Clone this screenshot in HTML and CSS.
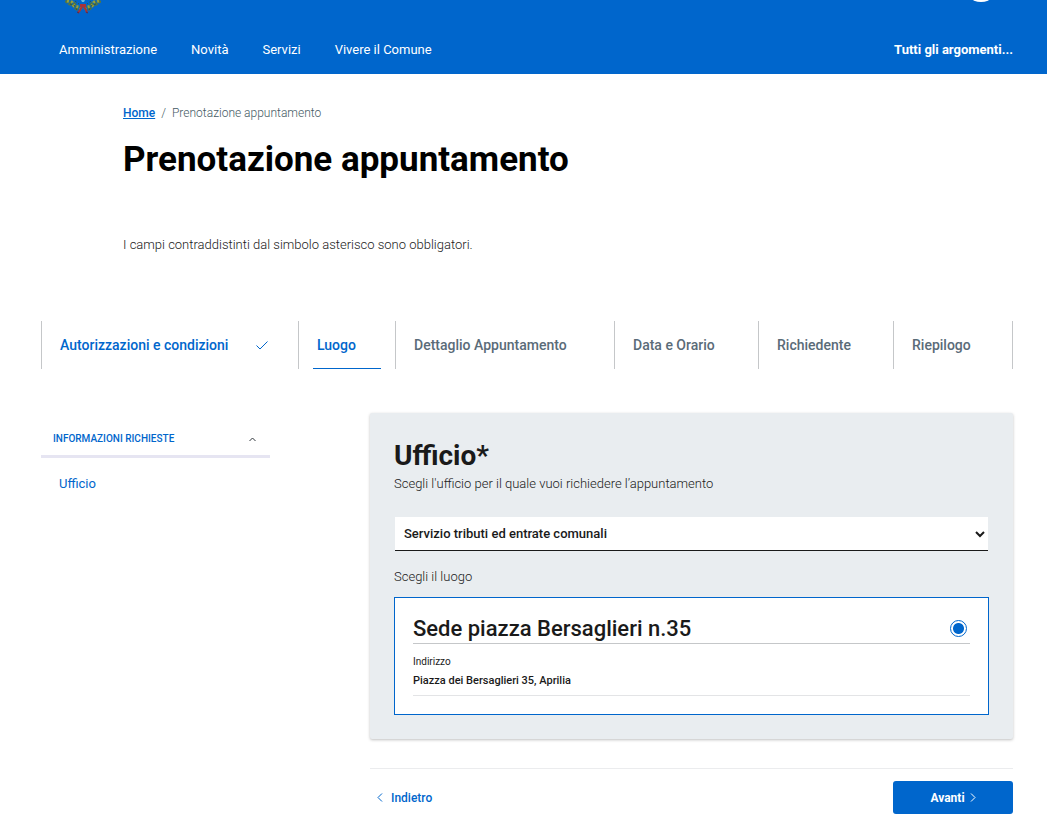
FILE: index.html
```
<!DOCTYPE html>
<html lang="it">
<head>
  <meta charset="UTF-8">
  <meta name="viewport" content="width=device-width, initial-scale=1">
  <title>Prenotazione appuntamento</title>
  <link rel="stylesheet" href="styles.css">
</head>
<body>
  <header class="header">
    <div class="header-brand">
      <svg class="crest" viewBox="0 0 36 14" width="36" height="14" aria-hidden="true">
        <g fill="none">
          <path d="M1 0l4 3 3 1 4 4 4 1M35 0l-4 3-3 1-4 4-4 1" stroke="#4f7548" stroke-width="5" stroke-dasharray="3 1"/>
          <path d="M2 1l5 1 2 4 5 1 3 3M34 1l-5 1-2 4-5 1-3 3" stroke="#96a03c" stroke-width="3" stroke-dasharray="2 2"/>
          <path d="M5 4l4 1 3 5M31 4l-4 1-3 5M10 1l4 3M26 1l-4 3" stroke="#35543f" stroke-width="1" stroke-dasharray="2 2"/>
        </g>
        <path d="M16 0h4l-1 2h-2z" fill="#69b8e0"/>
        <path d="M15 4h6v3h-6z" fill="#a8323a"/>
        <path d="M17 7l-2 3-2 3M19 7l2 3 1 3" fill="none" stroke="#a8323a" stroke-width="2"/>
        <path d="M12 12l2 1M21 12l2 1" stroke="#4b2c50" stroke-width="1"/>
      </svg>
      <svg class="search-circle" viewBox="0 34 36 2" width="36" height="2" aria-hidden="true">
        <circle cx="18" cy="18" r="18" fill="#fff"/>
      </svg>
    </div>
    <nav class="header-nav">
      <a href="#">Amministrazione</a>
      <a href="#">Novità</a>
      <a href="#">Servizi</a>
      <a href="#">Vivere il Comune</a>
      <a href="#" class="all-topics">Tutti gli argomenti...</a>
    </nav>
  </header>

  <main class="container">
    <section class="intro">
      <nav class="breadcrumb">
        <a href="#">Home</a>
        <span>/</span>
        <span>Prenotazione appuntamento</span>
      </nav>
      <h1>Prenotazione appuntamento</h1>
      <p>I campi contraddistinti dal simbolo asterisco sono obbligatori.</p>
    </section>

    <ol class="steps">
      <li class="done">Autorizzazioni e condizioni
        <svg viewBox="0 0 12 9" width="12" height="9" aria-hidden="true"><path d="M.5 4.500l3.500 3.500 7.500-7.500" fill="none" stroke="#0066cc"/></svg>
      </li>
      <li class="active">Luogo</li>
      <li>Dettaglio Appuntamento</li>
      <li>Data e Orario</li>
      <li>Richiedente</li>
      <li>Riepilogo</li>
    </ol>

    <div class="columns">
      <aside class="sidebar">
        <button type="button" class="sidebar-toggle">Informazioni richieste
          <svg viewBox="0 0 7 5" width="7" height="5" aria-hidden="true"><path d="M.5 4l3-3 3 3" fill="none" stroke="#30373d"/></svg>
        </button>
        <a href="#ufficio">Ufficio</a>
      </aside>

      <form class="booking">
        <section class="panel" id="ufficio">
          <h2><label for="office">Ufficio*</label></h2>
          <p>Scegli l'ufficio per il quale vuoi richiedere l’appuntamento</p>
          <div class="select-wrap">
            <select id="office">
              <option>Servizio tributi ed entrate comunali</option>
            </select>
            <svg viewBox="0 0 10 7" width="10" height="7" aria-hidden="true"><path d="M1 1l4 4 4-4" fill="none" stroke="#1a1a1a" stroke-width="2"/></svg>
          </div>
          <p class="place-label">Scegli il luogo</p>
          <div class="place">
            <div class="place-head">
              <label for="place-1">Sede piazza Bersaglieri n.35</label>
              <input type="radio" id="place-1" name="place" checked>
            </div>
            <div class="place-body">
              <span>Indirizzo</span>
              <strong>Piazza dei Bersaglieri 35, Aprilia</strong>
            </div>
          </div>
        </section>

        <div class="actions">
          <button type="button" class="btn-back">
            <svg viewBox="0 0 6 9" width="6" height="9" aria-hidden="true"><path d="M5 .5l-4 4 4 4" fill="none" stroke="currentColor"/></svg>
            Indietro
          </button>
          <button type="button" class="btn-next">
            Avanti
            <svg viewBox="0 0 6 9" width="6" height="9" aria-hidden="true"><path d="M1 .5l4 4-4 4" fill="none" stroke="currentColor"/></svg>
          </button>
        </div>
      </form>
    </div>
  </main>
</body>
</html>
```

FILE: styles.css
```
* {
  box-sizing: border-box;
}

body {
  margin: 0;
  font-family: Roboto, "Liberation Sans", sans-serif;
  font-size: 13px;
  line-height: 20px;
  color: #1a1a1a;
  background: #fff;
}

h1, h2, p {
  margin: 0;
}

p {
  font-weight: 300;
}

a {
  color: #0066cc;
  text-decoration: none;
}

button {
  font-family: inherit;
  border: none;
  cursor: pointer;
}

/* header */
.header {
  background: #0066cc;
  padding: 0 34px 0 59px;
}

.header-brand {
  display: flex;
  justify-content: space-between;
  align-items: flex-start;
  height: 40px;
  padding: 0 14px 0 6px;
}

.header-nav {
  display: flex;
  gap: 34px;
  padding-bottom: 14px;
}

.header-nav a {
  color: #fff;
}

.header-nav .all-topics {
  margin-left: auto;
  font-weight: 700;
}

/* page intro */
.container {
  padding: 0 34px 0 41px;
}

.intro {
  padding: 29px 0 0 82px;
}

.breadcrumb {
  display: flex;
  gap: 6px;
  font-size: 12px;
  font-weight: 300;
  color: #455a64;
}

.breadcrumb a {
  font-weight: 500;
  text-decoration: underline;
}

h1 {
  margin-top: 15px;
  font-size: 35px;
  line-height: 44px;
  font-weight: 700;
  color: #000;
}

.intro p {
  margin-top: 53px;
}

/* steps */
.steps {
  display: grid;
  grid-template-columns: 257fr 97fr 219fr 144fr 135fr 119fr;
  margin: 66px 0 44px;
  padding: 0;
  list-style: none;
  border-right: 1px solid #c5c7c9;
}

.steps li {
  position: relative;
  display: flex;
  align-items: center;
  height: 48px;
  padding-left: 18px;
  border-left: 1px solid #c5c7c9;
  font-size: 14px;
  font-weight: 500;
  color: #5a6b78;
  white-space: nowrap;
}

.steps .done,
.steps .active {
  color: #0066cc;
}

.steps .done {
  justify-content: space-between;
  padding-right: 30px;
}

.steps .active::after {
  content: "";
  position: absolute;
  left: 14px;
  right: 14px;
  bottom: 0;
  height: 1px;
  background: #0066cc;
}

/* columns */
.columns {
  display: grid;
  grid-template-columns: 229fr 643fr;
  gap: 100px;
}

.sidebar {
  padding-top: 10px;
}

.sidebar-toggle {
  display: flex;
  justify-content: space-between;
  align-items: center;
  width: 100%;
  padding: 6px 14px 6px 12px;
  background: none;
  border-bottom: 3px solid #e6e5f2;
  font-size: 10px;
  line-height: 20px;
  font-weight: 500;
  text-transform: uppercase;
  color: #0066cc;
}

.sidebar a {
  display: block;
  padding: 16px 18px;
}

.panel {
  padding: 25px 24px 24px;
  background: #e9edf0;
  border-radius: 2px;
  box-shadow: 0 1px 3px rgba(0, 0, 0, 0.25);
}

h2 {
  font-size: 28px;
  line-height: 36px;
  font-weight: 700;
}

.select-wrap {
  position: relative;
  margin: 23px 1px 16px;
}

.select-wrap select {
  display: block;
  width: 100%;
  height: 34px;
  padding: 0 30px 0 9px;
  appearance: none;
  background: #fff;
  border: none;
  border-bottom: 1px solid #1a1a1a;
  border-radius: 0;
  font-family: inherit;
  font-size: 13px;
  font-weight: 500;
  color: #1a1a1a;
}

.select-wrap svg {
  position: absolute;
  right: 3px;
  top: 14px;
  pointer-events: none;
}

.place {
  margin-top: 10px;
  padding: 17px 18px 18px;
  background: #fff;
  border: 1px solid #0066cc;
}

.place-head {
  display: flex;
  justify-content: space-between;
  align-items: center;
  padding-right: 3px;
  border-bottom: 1px solid #c5c7c9;
}

.place-head label {
  font-size: 22px;
  line-height: 28px;
  font-weight: 500;
}

.place-head input {
  appearance: none;
  width: 17px;
  height: 17px;
  margin: 0 0 2px;
  border: 1px solid #0066cc;
  border-radius: 50%;
  background: radial-gradient(circle, #0066cc 5px, #fff 6px);
}

.place-body {
  display: flex;
  flex-direction: column;
  padding: 8px 0 5px;
  border-bottom: 1px solid #e3e4e6;
  font-size: 11px;
  line-height: 19px;
}

.place-body span {
  font-size: 10px;
}

.place-body strong {
  font-weight: 500;
}

/* actions */
.actions {
  display: flex;
  justify-content: space-between;
  margin-top: 29px;
  padding-top: 12px;
  border-top: 1px solid #ebecee;
}

.actions button {
  display: flex;
  align-items: center;
  gap: 8px;
  height: 33px;
  font-size: 12px;
  font-weight: 500;
}

.btn-back {
  padding: 0 7px;
  background: none;
  color: #0066cc;
}

.actions .btn-next {
  justify-content: center;
  gap: 5px;
  width: 120px;
  background: #0066cc;
  border-radius: 3px;
  color: #fff;
  font-weight: 700;
}
```
